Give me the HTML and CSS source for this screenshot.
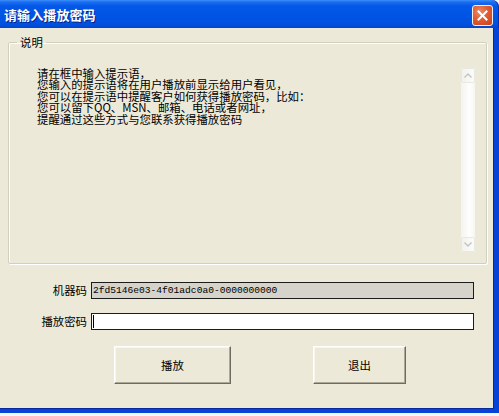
FILE: index.html
```html
<!DOCTYPE html>
<html lang="zh-CN">
<head>
<meta charset="utf-8">
<title>请输入播放密码</title>
<link rel="stylesheet" href="styles.css">
</head>
<body>
<div class="window">
  <div class="titlebar">
    <span class="title">请输入播放密码</span>
    <span class="close">
      <svg width="11" height="11" viewBox="0 0 11 11"><path d="M1.5 1.5 L9.5 9.5 M9.5 1.5 L1.5 9.5" stroke="#fff" stroke-width="2" stroke-linecap="square"/></svg>
    </span>
  </div>
  <div class="body">
    <fieldset class="group">
      <legend>说明</legend>
      <div class="memo">
        <div class="memo-text">
          <div class="line">请在框中输入提示语，</div>
          <div class="line">您输入的提示语将在用户播放前显示给用户看见，</div>
          <div class="line">您可以在提示语中提醒客户如何获得播放密码，比如：</div>
          <div class="line">您可以留下QQ、MSN、邮箱、电话或者网址，</div>
          <div class="line">提醒通过这些方式与您联系获得播放密码</div>
        </div>
        <div class="vscroll">
          <div class="sb-btn"><svg width="8" height="5" viewBox="0 0 8 5"><path d="M0.5 4.5 L4 1 L7.5 4.5" fill="none" stroke="#c3c3c0" stroke-width="1.4"/></svg></div>
          <div class="sb-track"></div>
          <div class="sb-btn"><svg width="8" height="5" viewBox="0 0 8 5"><path d="M0.5 0.5 L4 4 L7.5 0.5" fill="none" stroke="#c3c3c0" stroke-width="1.4"/></svg></div>
        </div>
      </div>
    </fieldset>
    <div class="form">
      <span class="label">机器码</span>
      <div class="field readonly">2fd5146e03-4f01adc0a0-0000000000</div>
      <span class="label">播放密码</span>
      <div class="field input"><span class="caret"></span></div>
    </div>
    <div class="buttons">
      <button class="btn play">播放</button>
      <button class="btn exit">退出</button>
    </div>
  </div>
</div>
</body>
</html>
```
FILE: styles.css
```css
html, body {
  margin: 0;
  padding: 0;
}
body {
  width: 499px;
  height: 416px;
  background: #f4f6fb;
  font-family: "Noto Sans CJK SC", "Noto Sans", sans-serif;
  overflow: hidden;
}
.window {
  width: 499px;
}
.titlebar {
  height: 28px;
  box-sizing: border-box;
  display: flex;
  align-items: center;
  justify-content: space-between;
  padding: 0 6px 0 4px;
  border-top-right-radius: 7px;
  background: linear-gradient(to bottom, #3d8ef8 0%, #1a6cf0 8%, #0458e8 22%, #0054e3 60%, #0151df 85%, #0045cf 100%);
  box-shadow: inset -1px 0 #0a2fae;
}
.title {
  color: #fff;
  font-weight: bold;
  font-size: 13px;
  line-height: 13px;
  letter-spacing: 0.1px;
  text-shadow: 1px 1px #0a1f8c;
}
.close {
  width: 21px;
  height: 21px;
  box-sizing: border-box;
  margin-top: 2px;
  border: 1px solid #f4f0ee;
  border-radius: 3px;
  background: radial-gradient(circle at 35% 30%, #ec8a64 0%, #df5c34 45%, #c8411b 100%);
  display: flex;
  align-items: center;
  justify-content: center;
}
.body {
  height: 385px;
  box-sizing: border-box;
  background: #ece9d8;
  border-right: 5px solid #0843d8;
  border-bottom: 4px solid #0843d8;
  box-shadow: inset -1px -1px #0a2a9c;
  padding-top: 8px;
}
.group {
  margin: 0 7px 0 8px;
  padding: 20px 11px 11px 28px;
  border: 1px solid #d0d0bf;
  border-radius: 2px;
  box-shadow: inset 1px 1px #fff, 1px 1px #fff;
  min-width: 0;
}
.group legend {
  margin-left: -20px;
  padding: 0 3px;
  font-size: 11.4px;
  line-height: 12px;
  color: #000;
}
.memo {
  display: flex;
  height: 184px;
}
.memo-text {
  flex: 1;
  font-size: 11.4px;
  color: #000;
  white-space: nowrap;
}
.line {
  height: 11.4px;
  line-height: 11.4px;
}
.vscroll {
  width: 14px;
  display: flex;
  flex-direction: column;
  background: linear-gradient(to right, #f3f3ef, #fefefe 60%, #f5f5f1);
}
.sb-btn {
  height: 15px;
  box-sizing: border-box;
  border: 1px solid #e9e9e3;
  border-radius: 2px;
  background: linear-gradient(to right, #f2f2ee, #fbfbf8);
  display: flex;
  align-items: center;
  justify-content: center;
}
.sb-track {
  flex: 1;
}
.form {
  margin-top: 18px;
  display: grid;
  grid-template-columns: 87px 383px;
  grid-auto-rows: 17px;
  column-gap: 4px;
  row-gap: 14px;
}
.label {
  font-size: 11.4px;
  line-height: 17px;
  text-align: right;
  color: #000;
}
.field {
  box-sizing: border-box;
  border: 1px solid #1c1c1c;
  display: flex;
  align-items: center;
}
.readonly {
  background: #d6d3ca;
  font-family: "Liberation Mono", monospace;
  font-size: 9.6px;
  padding-left: 1px;
  color: #000;
}
.input {
  background: #fff;
  padding-left: 1px;
}
.caret {
  width: 1px;
  height: 13px;
  background: #000;
}
.buttons {
  margin-top: 16px;
  padding-left: 114px;
  display: flex;
  gap: 82px;
}
.btn {
  height: 38px;
  padding: 0;
  box-sizing: border-box;
  background: #ece9d8;
  border-top: 1px solid #fff;
  border-left: 1px solid #fff;
  border-right: 1px solid #6e6c62;
  border-bottom: 1px solid #6e6c62;
  box-shadow: inset -1px -1px #aca899, inset 1px 1px #f7f6f0;
  border-radius: 0;
  font-family: "Noto Sans CJK SC", sans-serif;
  font-size: 11.4px;
  color: #000;
}
.play {
  width: 117px;
}
.exit {
  width: 93px;
}
```
